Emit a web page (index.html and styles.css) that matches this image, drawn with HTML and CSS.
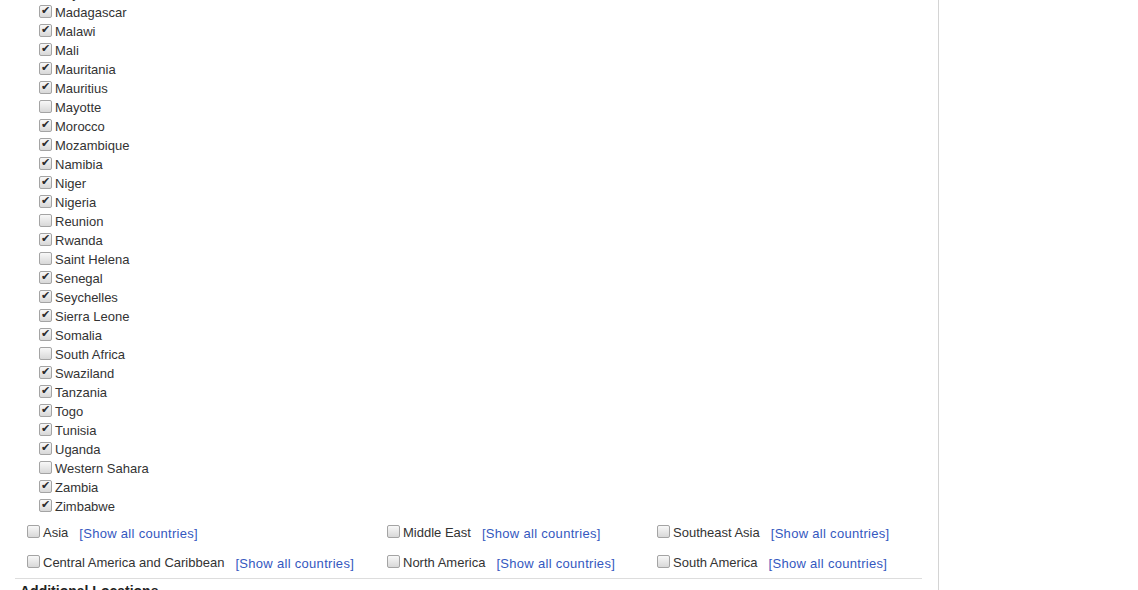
FILE: index.html
```html
<!DOCTYPE html>
<html>
<head>
  <title>Locations</title>
  <link rel="stylesheet" href="styles.css">
</head>
<body>
  <div class="page">
    <div class="content">
      <div class="country-list">
        <label class="country"><input type="checkbox" checked> Libya</label>
        <label class="country"><input type="checkbox" checked> Madagascar</label>
        <label class="country"><input type="checkbox" checked> Malawi</label>
        <label class="country"><input type="checkbox" checked> Mali</label>
        <label class="country"><input type="checkbox" checked> Mauritania</label>
        <label class="country"><input type="checkbox" checked> Mauritius</label>
        <label class="country"><input type="checkbox"> Mayotte</label>
        <label class="country"><input type="checkbox" checked> Morocco</label>
        <label class="country"><input type="checkbox" checked> Mozambique</label>
        <label class="country"><input type="checkbox" checked> Namibia</label>
        <label class="country"><input type="checkbox" checked> Niger</label>
        <label class="country"><input type="checkbox" checked> Nigeria</label>
        <label class="country"><input type="checkbox"> Reunion</label>
        <label class="country"><input type="checkbox" checked> Rwanda</label>
        <label class="country"><input type="checkbox"> Saint Helena</label>
        <label class="country"><input type="checkbox" checked> Senegal</label>
        <label class="country"><input type="checkbox" checked> Seychelles</label>
        <label class="country"><input type="checkbox" checked> Sierra Leone</label>
        <label class="country"><input type="checkbox" checked> Somalia</label>
        <label class="country"><input type="checkbox"> South Africa</label>
        <label class="country"><input type="checkbox" checked> Swaziland</label>
        <label class="country"><input type="checkbox" checked> Tanzania</label>
        <label class="country"><input type="checkbox" checked> Togo</label>
        <label class="country"><input type="checkbox" checked> Tunisia</label>
        <label class="country"><input type="checkbox" checked> Uganda</label>
        <label class="country"><input type="checkbox"> Western Sahara</label>
        <label class="country"><input type="checkbox" checked> Zambia</label>
        <label class="country"><input type="checkbox" checked> Zimbabwe</label>
      </div>

      <div class="regions">
        <div class="region">
          <label><input type="checkbox"> Asia</label>
          <a href="#">[Show all countries]</a>
        </div>
        <div class="region">
          <label><input type="checkbox"> Middle East</label>
          <a href="#">[Show all countries]</a>
        </div>
        <div class="region">
          <label><input type="checkbox"> Southeast Asia</label>
          <a href="#">[Show all countries]</a>
        </div>
        <div class="region">
          <label><input type="checkbox"> Central America and Caribbean</label>
          <a href="#">[Show all countries]</a>
        </div>
        <div class="region">
          <label><input type="checkbox"> North America</label>
          <a href="#">[Show all countries]</a>
        </div>
        <div class="region">
          <label><input type="checkbox"> South America</label>
          <a href="#">[Show all countries]</a>
        </div>
      </div>

      <div class="section">
        <div class="section-title">Additional Locations</div>
      </div>
    </div>
  </div>
</body>
</html>
```

FILE: styles.css
```css
body {
  margin: 0;
  font-family: "Liberation Sans", Arial, sans-serif;
  font-size: 13px;
  color: #333;
  background-color: #fff;
  overflow: hidden;
}

.page {
  width: 938px;
  height: 590px;
  border-right: 1px solid #d4d4d4;
  overflow: hidden;
}

.content {
  margin-left: 15px;
  width: 907px;
}

/* list is scrolled, first row is half out of view */
.country-list {
  margin-top: -16px;
  padding-left: 24px;
}

.country {
  display: flex;
  align-items: center;
  height: 19px;
}

input[type="checkbox"] {
  appearance: none;
  -webkit-appearance: none;
  box-sizing: border-box;
  width: 13px;
  height: 13px;
  margin: 0 3px 2px 0;
  border: 1px solid #a4a4a4;
  border-radius: 2px;
  background: linear-gradient(#f8f8f8, #d8d8d8);
  position: relative;
  flex: none;
}

input[type="checkbox"]:checked::after {
  content: "\2714";
  position: absolute;
  left: 1px;
  top: -2px;
  font-family: "DejaVu Sans", sans-serif;
  font-size: 11px;
  font-weight: bold;
  color: #2b2b2b;
}

.regions {
  display: grid;
  grid-template-columns: 360px 270px auto;
  padding-left: 12px;
  padding-top: 1px;
  padding-bottom: 1px;
  border-bottom: 1px solid #ddd;
}

.region {
  display: flex;
  align-items: center;
  height: 30px;
}

.region label {
  display: flex;
  align-items: center;
  margin-right: 11px;
}

.region input[type="checkbox"] {
  margin-right: 3px;
}

.region a {
  color: #3458c0;
  text-decoration: none;
  letter-spacing: 0.3px;
  padding-top: 2px;
}

.section {
  padding: 4px 5px;
}

.section-title {
  font-weight: bold;
  font-size: 14px;
  color: #222;
}
```
